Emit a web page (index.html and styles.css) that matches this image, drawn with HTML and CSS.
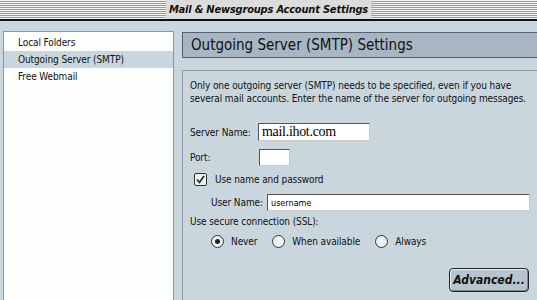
FILE: index.html
```html
<!DOCTYPE html>
<html lang="en">
<head>
    <meta charset="UTF-8">
    <title>Mail &amp; Newsgroups Account Settings</title>
    <link rel="stylesheet" href="styles.css">
</head>
<body>
    <!-- Window title -->
    <div class="titlebar">
        <span class="title">Mail &amp; Newsgroups Account Settings</span>
    </div>

    <div class="window">
        <!-- Account list -->
        <ul class="accounts">
            <li>Local Folders</li>
            <li class="selected">Outgoing Server (SMTP)</li>
            <li>Free Webmail</li>
        </ul>

        <!-- Settings pane -->
        <div class="pane">
            <div class="pane-header">Outgoing Server (SMTP) Settings</div>
            <div class="pane-body">
                <p class="intro">Only one outgoing server (SMTP) needs to be specified, even if you have<br>several mail accounts. Enter the name of the server for outgoing messages.</p>

                <div class="row server-row">
                    <label class="label">Server Name:</label>
                    <input type="text" class="field server" value="mail.ihot.com">
                </div>
                <div class="row port-row">
                    <label class="label">Port:</label>
                    <input type="text" class="field port">
                </div>
                <div class="row check-row">
                    <span class="checkbox"><svg width="9" height="9" viewBox="0 0 9 9"><path d="M1 4.5 L3.5 7.5 L8 1" fill="none" stroke="#222" stroke-width="1.6"/></svg></span>
                    <span>Use name and password</span>
                </div>
                <div class="row user-row">
                    <label class="label">User Name:</label>
                    <input type="text" class="field user" value="username">
                </div>
                <div class="ssl-label">Use secure connection (SSL):</div>
                <div class="radios">
                    <span class="radio on"></span><span class="radio-text">Never</span>
                    <span class="radio"></span><span class="radio-text">When available</span>
                    <span class="radio"></span><span class="radio-text">Always</span>
                </div>
                <div class="actions">
                    <button class="advanced">Advanced...</button>
                </div>
            </div>
        </div>
    </div>
</body>
</html>
```
FILE: styles.css
```css
/* Page */
body {
    margin: 0;
    width: 537px;
    height: 300px;
    overflow: hidden;
    background-color: #c9d6de;
    font-family: 'DejaVu Sans', sans-serif;
    font-stretch: condensed;
    font-size: 10px;
    letter-spacing: -0.1px;
    color: #111;
    white-space: nowrap;
}

/* Title bar with pinstripes */
.titlebar {
    height: 19px;
    border-bottom: 2px solid #111;
    background: repeating-linear-gradient(to bottom, #f2f2f2 0, #f2f2f2 1px, #9a9a9a 1px, #9a9a9a 2px);
    background-color: #ddd;
    display: flex;
    justify-content: center;
    align-items: center;
}

.title {
    background-color: #dcdcdc;
    padding: 0 3px;
    height: 19px;
    line-height: 19px;
    font-weight: bold;
    font-style: italic;
    font-size: 11px;
    letter-spacing: -0.2px;
    color: #111;
}

.window {
    display: flex;
    align-items: flex-start;
    padding: 10px 0 0 3px;
}

/* Left list */
.accounts {
    list-style: none;
    margin: 0;
    padding: 2px 0 0;
    width: 169px;
    height: 300px;
    background-color: #fdfffd;
    border: 1px solid #8d979d;
    flex-shrink: 0;
}

.accounts li {
    height: 17px;
    line-height: 17px;
    padding-left: 14px;
}

.accounts li.selected {
    background-color: #c9d6de;
}

/* Right pane */
.pane {
    margin-left: 8px;
    width: 380px;
    flex-shrink: 0;
}

.pane-header {
    margin-top: 1px;
    height: 24px;
    line-height: 24px;
    padding-left: 8px;
    background-color: #a7b6c3;
    border: 1px solid #56616b;
    font-size: 15px;
    letter-spacing: 0;
    color: #111;
}

.pane-body {
    margin-top: 12px;
    height: 300px;
    border: 1px solid #8e9aa2;
    padding: 0 0 0 7px;
}

.intro {
    margin: 8px 0 0;
    line-height: 13px;
}

.row {
    display: flex;
    align-items: center;
}

.label {
    width: 68px;
    flex-shrink: 0;
}

.field {
    box-sizing: border-box;
    border: 1px solid #555;
    border-right-color: #ccc;
    border-bottom-color: #ccc;
    background-color: #fff;
    padding: 0 3px;
    margin: 0;
    outline: none;
}

.server-row {
    margin-top: 18px;
}

.server {
    width: 112px;
    height: 18px;
    font-family: 'Liberation Serif', serif;
    font-size: 14px;
    letter-spacing: -0.3px;
    color: #000;
}

.port-row {
    margin-top: 8px;
}

.port {
    width: 31px;
    height: 17px;
    margin-left: 1px;
}

.check-row {
    margin-top: 7px;
    padding-left: 4px;
}

.checkbox {
    width: 11px;
    height: 11px;
    border: 1px solid #333;
    border-radius: 2px;
    background-color: #eef2f4;
    display: flex;
    align-items: center;
    justify-content: center;
    margin-right: 8px;
}

.user-row {
    margin-top: 8px;
    padding-left: 21px;
}

.user-row .label {
    width: 56px;
}

.user {
    width: 263px;
    height: 17px;
    font-family: 'DejaVu Sans', sans-serif;
    font-stretch: condensed;
    font-size: 9px;
}

.ssl-label {
    margin-top: 5px;
}

.radios {
    display: flex;
    align-items: center;
    margin-top: 8px;
    padding-left: 21px;
}

.radio {
    width: 11px;
    height: 11px;
    border: 1px solid #333;
    border-radius: 50%;
    background-color: #eef2f4;
    display: flex;
    align-items: center;
    justify-content: center;
    margin-right: 7px;
}

.radio.on::after {
    content: "";
    width: 5px;
    height: 5px;
    border-radius: 50%;
    background-color: #222;
}

.radio-text {
    margin-right: 15px;
}

.actions {
    display: flex;
    justify-content: flex-end;
    width: 339px;
    margin-top: 20px;
}

.advanced {
    width: 80px;
    height: 24px;
    border: 1px solid #222;
    border-radius: 4px;
    background-color: #b8c4cd;
    box-shadow: inset 1px 1px 0 #e8eef2, inset -1px -1px 0 #7d8891;
    font-family: 'DejaVu Sans', sans-serif;
    font-stretch: condensed;
    font-weight: bold;
    font-style: italic;
    font-size: 12px;
    letter-spacing: 0;
    color: #111;
    padding: 0;
}
```
